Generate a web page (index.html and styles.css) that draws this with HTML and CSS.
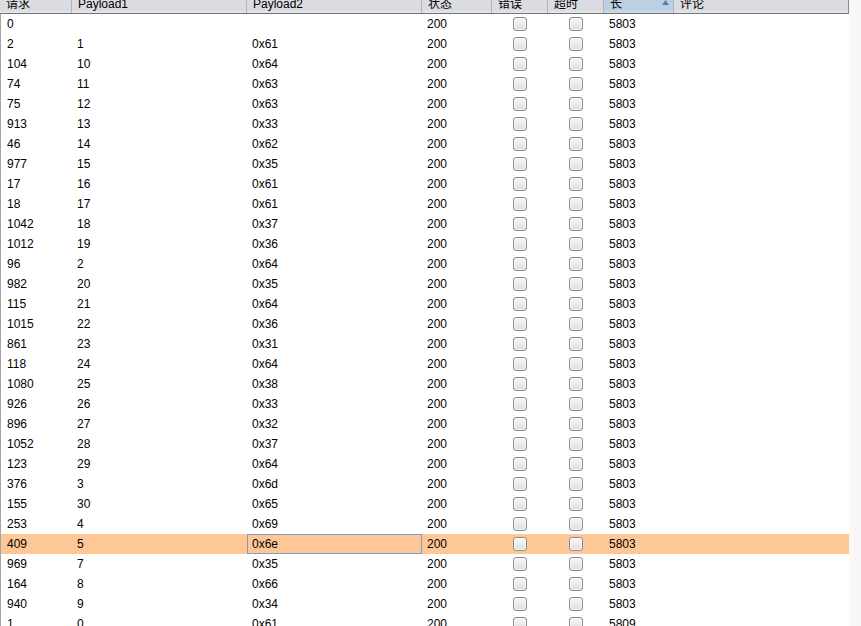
FILE: index.html
```html
<!DOCTYPE html>
<html>
<head>
<meta charset="utf-8">
<link rel="stylesheet" href="styles.css">
</head>
<body>
<div class="table">
  <div class="head">
    <div class="hc">请求</div>
    <div class="hc">Payload1</div>
    <div class="hc">Payload2</div>
    <div class="hc">状态</div>
    <div class="hc">错误</div>
    <div class="hc">超时</div>
    <div class="hc sorted"><span>长</span><svg class="tri" width="7" height="5" viewBox="0 0 7 5"><polygon points="0,5 7,5 3.5,0" fill="#4f7fb5"/></svg></div>
    <div class="hc last">评论</div>
  </div>
  <div class="rows">
    <div class="row"><div class="c first">0</div><div class="c"></div><div class="c"></div><div class="c">200</div><div class="c cb"><span class="box"></span></div><div class="c cb"><span class="box"></span></div><div class="c">5803</div><div class="c"></div></div>
    <div class="row"><div class="c first">2</div><div class="c">1</div><div class="c">0x61</div><div class="c">200</div><div class="c cb"><span class="box"></span></div><div class="c cb"><span class="box"></span></div><div class="c">5803</div><div class="c"></div></div>
    <div class="row"><div class="c first">104</div><div class="c">10</div><div class="c">0x64</div><div class="c">200</div><div class="c cb"><span class="box"></span></div><div class="c cb"><span class="box"></span></div><div class="c">5803</div><div class="c"></div></div>
    <div class="row"><div class="c first">74</div><div class="c">11</div><div class="c">0x63</div><div class="c">200</div><div class="c cb"><span class="box"></span></div><div class="c cb"><span class="box"></span></div><div class="c">5803</div><div class="c"></div></div>
    <div class="row"><div class="c first">75</div><div class="c">12</div><div class="c">0x63</div><div class="c">200</div><div class="c cb"><span class="box"></span></div><div class="c cb"><span class="box"></span></div><div class="c">5803</div><div class="c"></div></div>
    <div class="row"><div class="c first">913</div><div class="c">13</div><div class="c">0x33</div><div class="c">200</div><div class="c cb"><span class="box"></span></div><div class="c cb"><span class="box"></span></div><div class="c">5803</div><div class="c"></div></div>
    <div class="row"><div class="c first">46</div><div class="c">14</div><div class="c">0x62</div><div class="c">200</div><div class="c cb"><span class="box"></span></div><div class="c cb"><span class="box"></span></div><div class="c">5803</div><div class="c"></div></div>
    <div class="row"><div class="c first">977</div><div class="c">15</div><div class="c">0x35</div><div class="c">200</div><div class="c cb"><span class="box"></span></div><div class="c cb"><span class="box"></span></div><div class="c">5803</div><div class="c"></div></div>
    <div class="row"><div class="c first">17</div><div class="c">16</div><div class="c">0x61</div><div class="c">200</div><div class="c cb"><span class="box"></span></div><div class="c cb"><span class="box"></span></div><div class="c">5803</div><div class="c"></div></div>
    <div class="row"><div class="c first">18</div><div class="c">17</div><div class="c">0x61</div><div class="c">200</div><div class="c cb"><span class="box"></span></div><div class="c cb"><span class="box"></span></div><div class="c">5803</div><div class="c"></div></div>
    <div class="row"><div class="c first">1042</div><div class="c">18</div><div class="c">0x37</div><div class="c">200</div><div class="c cb"><span class="box"></span></div><div class="c cb"><span class="box"></span></div><div class="c">5803</div><div class="c"></div></div>
    <div class="row"><div class="c first">1012</div><div class="c">19</div><div class="c">0x36</div><div class="c">200</div><div class="c cb"><span class="box"></span></div><div class="c cb"><span class="box"></span></div><div class="c">5803</div><div class="c"></div></div>
    <div class="row"><div class="c first">96</div><div class="c">2</div><div class="c">0x64</div><div class="c">200</div><div class="c cb"><span class="box"></span></div><div class="c cb"><span class="box"></span></div><div class="c">5803</div><div class="c"></div></div>
    <div class="row"><div class="c first">982</div><div class="c">20</div><div class="c">0x35</div><div class="c">200</div><div class="c cb"><span class="box"></span></div><div class="c cb"><span class="box"></span></div><div class="c">5803</div><div class="c"></div></div>
    <div class="row"><div class="c first">115</div><div class="c">21</div><div class="c">0x64</div><div class="c">200</div><div class="c cb"><span class="box"></span></div><div class="c cb"><span class="box"></span></div><div class="c">5803</div><div class="c"></div></div>
    <div class="row"><div class="c first">1015</div><div class="c">22</div><div class="c">0x36</div><div class="c">200</div><div class="c cb"><span class="box"></span></div><div class="c cb"><span class="box"></span></div><div class="c">5803</div><div class="c"></div></div>
    <div class="row"><div class="c first">861</div><div class="c">23</div><div class="c">0x31</div><div class="c">200</div><div class="c cb"><span class="box"></span></div><div class="c cb"><span class="box"></span></div><div class="c">5803</div><div class="c"></div></div>
    <div class="row"><div class="c first">118</div><div class="c">24</div><div class="c">0x64</div><div class="c">200</div><div class="c cb"><span class="box"></span></div><div class="c cb"><span class="box"></span></div><div class="c">5803</div><div class="c"></div></div>
    <div class="row"><div class="c first">1080</div><div class="c">25</div><div class="c">0x38</div><div class="c">200</div><div class="c cb"><span class="box"></span></div><div class="c cb"><span class="box"></span></div><div class="c">5803</div><div class="c"></div></div>
    <div class="row"><div class="c first">926</div><div class="c">26</div><div class="c">0x33</div><div class="c">200</div><div class="c cb"><span class="box"></span></div><div class="c cb"><span class="box"></span></div><div class="c">5803</div><div class="c"></div></div>
    <div class="row"><div class="c first">896</div><div class="c">27</div><div class="c">0x32</div><div class="c">200</div><div class="c cb"><span class="box"></span></div><div class="c cb"><span class="box"></span></div><div class="c">5803</div><div class="c"></div></div>
    <div class="row"><div class="c first">1052</div><div class="c">28</div><div class="c">0x37</div><div class="c">200</div><div class="c cb"><span class="box"></span></div><div class="c cb"><span class="box"></span></div><div class="c">5803</div><div class="c"></div></div>
    <div class="row"><div class="c first">123</div><div class="c">29</div><div class="c">0x64</div><div class="c">200</div><div class="c cb"><span class="box"></span></div><div class="c cb"><span class="box"></span></div><div class="c">5803</div><div class="c"></div></div>
    <div class="row"><div class="c first">376</div><div class="c">3</div><div class="c">0x6d</div><div class="c">200</div><div class="c cb"><span class="box"></span></div><div class="c cb"><span class="box"></span></div><div class="c">5803</div><div class="c"></div></div>
    <div class="row"><div class="c first">155</div><div class="c">30</div><div class="c">0x65</div><div class="c">200</div><div class="c cb"><span class="box"></span></div><div class="c cb"><span class="box"></span></div><div class="c">5803</div><div class="c"></div></div>
    <div class="row"><div class="c first">253</div><div class="c">4</div><div class="c">0x69</div><div class="c">200</div><div class="c cb"><span class="box"></span></div><div class="c cb"><span class="box"></span></div><div class="c">5803</div><div class="c"></div></div>
    <div class="row selected"><div class="c first">409</div><div class="c">5</div><div class="c focus">0x6e</div><div class="c">200</div><div class="c cb"><span class="box"></span></div><div class="c cb"><span class="box"></span></div><div class="c">5803</div><div class="c"></div></div>
    <div class="row"><div class="c first">969</div><div class="c">7</div><div class="c">0x35</div><div class="c">200</div><div class="c cb"><span class="box"></span></div><div class="c cb"><span class="box"></span></div><div class="c">5803</div><div class="c"></div></div>
    <div class="row"><div class="c first">164</div><div class="c">8</div><div class="c">0x66</div><div class="c">200</div><div class="c cb"><span class="box"></span></div><div class="c cb"><span class="box"></span></div><div class="c">5803</div><div class="c"></div></div>
    <div class="row"><div class="c first">940</div><div class="c">9</div><div class="c">0x34</div><div class="c">200</div><div class="c cb"><span class="box"></span></div><div class="c cb"><span class="box"></span></div><div class="c">5803</div><div class="c"></div></div>
    <div class="row"><div class="c first">1</div><div class="c">0</div><div class="c">0x61</div><div class="c">200</div><div class="c cb"><span class="box"></span></div><div class="c cb"><span class="box"></span></div><div class="c">5809</div><div class="c"></div></div>
  </div>
</div>
</body>
</html>
```

FILE: styles.css
```css
html, body {
  margin: 0;
  padding: 0;
  background: #f8f8f8;
  height: 626px;
  overflow: hidden;
}

.table {
  width: 849px;
  background: #ffffff;
  font-family: "Liberation Sans", Arial, "Noto Sans CJK SC", sans-serif;
  font-size: 12px;
  color: #000000;
}

.head {
  display: grid;
  grid-template-columns: 72px 175px 175px 70px 56px 56px 70px 175px;
  height: 13px;
  border-bottom: 1px solid #747578;
  background: linear-gradient(to bottom, #dcdde2 0%, #dadbe0 75%, #e6e7ea 100%);
}

.hc {
  box-sizing: border-box;
  height: 13px;
  padding-left: 6px;
  line-height: 8px;
  border-right: 1px solid #b3b5ba;
  white-space: nowrap;
  overflow: visible;
}

.hc.last {
  border-right: 1px solid #8a8b8e;
}

.hc.sorted {
  display: flex;
  justify-content: space-between;
  align-items: flex-start;
  padding-right: 4px;
  background: linear-gradient(to bottom, #bccfe1 0%, #bdd0e2 75%, #cbdae8 100%);
}

.tri {
  display: block;
  margin-top: 0;
}

.rows {
  border-left: 1px solid #a4a4a4;
}

.row {
  display: grid;
  grid-template-columns: 71px 175px 175px 70px 56px 56px 70px 175px;
  height: 20px;
}

.row.selected {
  background: #ffc696;
}

.c {
  box-sizing: border-box;
  height: 20px;
  line-height: 20px;
  padding-left: 5px;
  white-space: nowrap;
}

.c.first {
  padding-left: 6px;
}

.c.focus {
  border: 1px solid #7e9ec2;
  line-height: 18px;
  padding-left: 4px;
}

.c.cb {
  display: flex;
  align-items: center;
  justify-content: center;
  padding-left: 0;
}

.box {
  display: block;
  box-sizing: border-box;
  width: 14px;
  height: 14px;
  border: 1px solid #8b8c8f;
  border-radius: 3px;
  background: linear-gradient(to bottom, #f7f7f8 0%, #eceded 45%, #dcdde1 100%);
  box-shadow: inset 0 0 0 1px rgba(255,255,255,0.6);
}
```
